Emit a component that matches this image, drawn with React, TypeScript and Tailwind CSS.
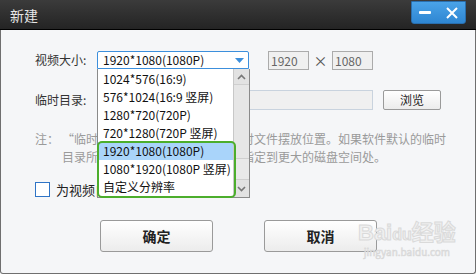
import React from 'react';

const font = { fontFamily: '"Noto Sans CJK SC", "Liberation Sans", sans-serif' };

const sizes = [
  '1024*576(16:9)',
  '576*1024(16:9 竖屏)',
  '1280*720(720P)',
  '720*1280(720P 竖屏)',
  '1920*1080(1080P)',
  '1080*1920(1080P 竖屏)',
  '自定义分辨率',
];

function TitleBar() {
  return (
    <div className="h-[30px] flex justify-between items-start bg-gradient-to-b from-[#3b3b3b] to-[#242424] border-b border-black">
      <span className="pl-[10px] pt-[6px] text-[14px] leading-[18px] text-[#e6e6e6]">新建</span>
      <div className="mt-[1px] mr-[10px] w-[55px] h-[23px] flex items-center rounded-b-[3px] bg-gradient-to-b from-[#4aa3e8] to-[#2e86d2] border border-[#2a6fae]">
        <div className="ml-[7px] w-[12px] h-[3px] bg-white rounded-[1px]" />
        <svg className="ml-[15px]" width="12" height="12" viewBox="0 0 12 12">
          <path d="M1 1 L11 11 M11 1 L1 11" stroke="white" strokeWidth="2" />
        </svg>
      </div>
    </div>
  );
}

function Dropdown() {
  return (
    <div className="absolute left-[97px] top-[69px] w-[153px] h-[129px] bg-white border border-[#8a8a8a] border-t-0 flex">
      <div className="flex-1 pt-[1px]">
        {sizes.map((s, i) => (
          <div
            key={s}
            className={`h-[18px] pl-[5px] text-[12px] leading-[18px] text-[#111] whitespace-nowrap ${i === 4 ? 'bg-[#a9d4fa]' : ''}`}
          >
            {s}
          </div>
        ))}
      </div>
      <div className="w-[16px] bg-[#e9e9e9] border-l border-[#c8c8c8] flex flex-col">
        <div className="h-[16px] bg-[#e2e2e2] border-b border-[#cfcfcf] flex items-center justify-center">
          <svg width="9" height="6" viewBox="0 0 9 6">
            <path d="M1 5 L4.5 1.5 L8 5" stroke="#777" strokeWidth="1.6" fill="none" />
          </svg>
        </div>
        <div className="h-[74px] bg-[#e6e6e6] border-b border-[#cfcfcf]" />
        <div className="flex-1" />
        <div className="h-[18px] bg-[#e2e2e2] border-t border-[#cfcfcf] flex items-center justify-center">
          <svg width="9" height="6" viewBox="0 0 9 6">
            <path d="M1 1 L4.5 4.5 L8 1" stroke="#777" strokeWidth="1.6" fill="none" />
          </svg>
        </div>
      </div>
    </div>
  );
}

export default function App() {
  return (
    <div className="relative w-[476px] h-[275px] flex flex-col bg-white" style={font}>
      <TitleBar />

      <div className="flex-1 mb-[1px] bg-[#f5f6f8] border-x border-b border-[#6f6f6f] rounded-b-[3px] px-[34px] pt-[21px] text-[12px] text-[#333]">
        {/* 视频大小 */}
        <div className="flex items-center h-[18px]">
          <span className="w-[62px]">视频大小:</span>
          <div className="w-[152px] h-[18px] bg-white border border-[#3c8fdc] rounded-t-[2px] flex items-center justify-between pl-[5px] pr-[4px]">
            <span className="text-[#111]">1920*1080(1080P)</span>
            <svg width="9" height="5" viewBox="0 0 9 5">
              <path d="M0 0 L9 0 L4.5 5 Z" fill="#3c8fdc" />
            </svg>
          </div>
          <div className="ml-[19px] w-[41px] h-[19px] bg-[#f0f0f0] border border-[#ababab] pl-[2px] leading-[17px] text-[#666]">1920</div>
          <span className="w-[23px] text-center text-[14px] text-[#555]">×</span>
          <div className="w-[41px] h-[19px] bg-[#f0f0f0] border border-[#ababab] pl-[2px] leading-[17px] text-[#666]">1080</div>
        </div>

        {/* 临时目录 */}
        <div className="flex items-center h-[20px] mt-[21px]">
          <span className="w-[62px]">临时目录:</span>
          <div className="w-[276px] h-[20px] bg-[#f0f0f0] border border-[#c9d3de]" />
          <button className="ml-[10px] w-[58px] h-[20px] border border-[#9a9a9a] rounded-[2px] bg-gradient-to-b from-white to-[#ececec] text-[12px] text-[#222]">
            浏览
          </button>
        </div>

        {/* 注 */}
        <div className="mt-[20px] flex text-[#9a9a9a] leading-[18px]">
          <span className="w-[27px] shrink-0">注：</span>
          <div className="flex flex-col whitespace-nowrap">
            <span>“临时目录”是软件制作视频的临时文件摆放位置。如果软件默认的临时</span>
            <span>目录所在磁盘空间不足，建议将其指定到更大的磁盘空间处。</span>
          </div>
        </div>

        {/* checkbox */}
        <div className="mt-[16px] flex items-center h-[15px]">
          <div className="w-[15px] h-[15px] bg-white border border-[#2f74c6]" />
          <span className="ml-[6px] text-[13px] text-[#222]">为视频自动添加片头片尾</span>
        </div>

        {/* buttons */}
        <div className="mt-[23px] flex pl-[65px] gap-[51px]">
          <button className="w-[113px] h-[32px] border border-[#9a9a9a] rounded-[3px] bg-gradient-to-b from-white to-[#ececec] text-[14px] font-bold text-[#222]">
            确定
          </button>
          <button className="w-[113px] h-[32px] border border-[#9a9a9a] rounded-[3px] bg-gradient-to-b from-white to-[#ececec] text-[14px] font-bold text-[#222]">
            取消
          </button>
        </div>
      </div>

      <Dropdown />

      {/* 绿色框 */}
      <div className="absolute left-[97px] top-[141px] w-[139px] h-[57px] border-2 border-[#4cae2c] rounded-[5px]" />

      {/* 水印 */}
      <div className="absolute left-[358px] top-[222px] flex flex-col items-center leading-none pointer-events-none">
        <span className="text-[22px] font-bold text-[#f0f0f0] [-webkit-text-stroke:1px_#dadada]" style={{ fontFamily: '"Liberation Sans", "Noto Sans CJK SC", sans-serif' }}>
          Bai<span className="text-[16px]">du</span>经验
        </span>
        <span className="mt-[3px] text-[10px] text-[#e8e8e8] [-webkit-text-stroke:0.5px_#d6d6d6]">jingyan.baidu.com</span>
      </div>
    </div>
  );
}
